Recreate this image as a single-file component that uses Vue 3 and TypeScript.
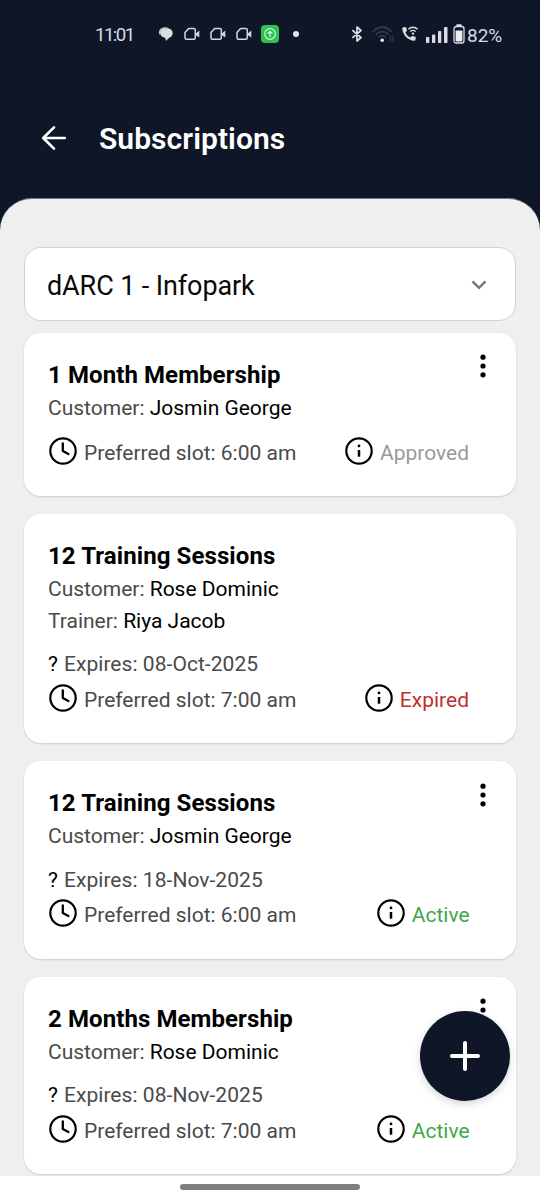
<script setup lang="ts">
interface Subscription {
  title: string
  customer: string
  trainer?: string
  expires?: string
  slot: string
  status: 'Approved' | 'Expired' | 'Active'
  menu: boolean
}

const subscriptions: Subscription[] = [
  { title: '1 Month Membership', customer: 'Josmin George', slot: '6:00 am', status: 'Approved', menu: true },
  { title: '12 Training Sessions', customer: 'Rose Dominic', trainer: 'Riya Jacob', expires: '08-Oct-2025', slot: '7:00 am', status: 'Expired', menu: false },
  { title: '12 Training Sessions', customer: 'Josmin George', expires: '18-Nov-2025', slot: '6:00 am', status: 'Active', menu: true },
  { title: '2 Months Membership', customer: 'Rose Dominic', expires: '08-Nov-2025', slot: '7:00 am', status: 'Active', menu: true },
]
</script>

<template>
  <div class="screen">
    <div class="statusbar">
      <span class="time">11:01</span>
      <div class="notices">
        <svg class="chat" width="16" height="16" viewBox="0 0 16 16">
          <path d="M1.2 8.500C-.2 4.200 3 1.200 7 1.200c1.500 0 3 .300 4 1-4-.4-8 1-8.300 6z" fill="#bfc1c7" />
          <path d="M8.500 2.300c3.600 0 6.200 2 6.200 4.800 0 2.500-1.700 4.300-3.800 4.900L8 15l-.7-3.100C4.500 11.400 2.400 9.700 2.400 7.300c0-2.900 2.800-5 6.100-5z" fill="#dcdde1" />
        </svg>
        <svg v-for="n in 3" :key="n" class="cam" width="16" height="14" viewBox="0 0 16 14">
          <path d="M4.600 1.500h5.200q1.500 0 1.500 1.500v7.800q0 1.500-1.500 1.500H2.500Q1 12.300 1 10.800V5.500z" fill="none" stroke="#d5d7dc" stroke-width="1.500" stroke-linejoin="round" />
          <path d="M12 6.300 15.300 3.600v7L12 8.300z" fill="#d5d7dc" />
        </svg>
        <svg class="green" width="18" height="18" viewBox="0 0 18 18">
          <rect width="18" height="18" rx="4" fill="#2fc052" />
          <circle cx="9" cy="9" r="5.300" fill="none" stroke="#c9f3d2" stroke-width="1.200" />
          <path d="M9 12V6.500M6.800 8.500 9 6.300l2.200 2.200" fill="none" stroke="#c9f3d2" stroke-width="1.300" />
        </svg>
        <span class="dot"></span>
      </div>
      <div class="system">
        <svg class="bt" width="12" height="18" viewBox="0 0 12 18">
          <path d="M1.300 5.200 10 12.500 6 16V2l4 3.500-8.700 7.300" fill="none" stroke="#dcdee2" stroke-width="1.700" stroke-linejoin="round" />
        </svg>
        <svg class="wifi" width="22" height="18" viewBox="0 0 22 18">
          <g fill="none" stroke="#2e3648" stroke-width="2" stroke-linecap="round">
            <path d="M1.500 6.200Q10 -2 19 6.200M4.300 9.300Q10.200 3.800 16 9.300M7 12Q10.200 9.300 13.300 12" />
            <path d="M18.500 11v5M21 11v5" stroke-width="1.400" />
          </g>
          <circle cx="10.200" cy="15.300" r="1.800" fill="#eceef0" />
        </svg>
        <svg class="call" width="18" height="18" viewBox="0 0 18 18">
          <path d="M1.300 3.500Q1 2.600 2 2.400L4.200 2q.8 0 1 .7l.7 2.500q.1.700-.4 1.100L4.300 7.500q1.600 3.500 5 5l1.400-1.300q.5-.4 1-.2l2.500.8q.7.300.6 1l-.4 2q-.2.900-1.100.9C7 15.500 1.700 10 1.300 3.500z" fill="#dcdee2" />
          <path d="M7.300 4.200q4.700-4 9.400 0M9.200 6.500q2.800-2.300 5.600 0" fill="none" stroke="#dcdee2" stroke-width="1.400" />
          <circle cx="12" cy="8.600" r="1.200" fill="#dcdee2" />
        </svg>
        <svg class="signal" width="22" height="16" viewBox="0 0 22 16">
          <g fill="#d9dbe0">
            <rect x="0" y="10" width="3.300" height="6" rx=".8" />
            <rect x="6" y="7.500" width="3.300" height="8.500" rx=".8" />
            <rect x="12" y="4" width="3.300" height="12" rx=".8" />
            <rect x="18" y="0" width="3.500" height="16" rx=".8" />
          </g>
        </svg>
        <svg class="battery" width="12" height="20" viewBox="0 0 12 20">
          <rect x="3.200" y=".3" width="5.600" height="2" rx="1" fill="#dcdee2" />
          <rect x="1" y="2.500" width="10" height="16.500" rx="2.200" fill="none" stroke="#dcdee2" stroke-width="1.300" />
          <rect x="2.600" y="6.500" width="6.800" height="10.900" rx=".8" fill="#eceef0" />
        </svg>
        <span class="pct">82%</span>
      </div>
    </div>

    <header class="header">
      <svg class="back" width="28" height="28" viewBox="0 0 28 28">
        <path d="M24.800 14H3.500M14 3.300 3.200 14 14 24.700" fill="none" stroke="#fff" stroke-width="2.600" stroke-linecap="round" stroke-linejoin="round" />
      </svg>
      <h1>Subscriptions</h1>
    </header>

    <main class="sheet">
      <div class="select">
        <span>dARC 1 - Infopark</span>
        <svg width="16" height="10" viewBox="0 0 16 10">
          <path d="M1.500 1.300 8 7.800l6.500-6.500" fill="none" stroke="#777" stroke-width="2.500" />
        </svg>
      </div>

      <article v-for="(item, i) in subscriptions" :key="i" class="card">
        <svg v-if="item.menu" class="menu" width="6" height="24" viewBox="0 0 6 24">
          <circle cx="3" cy="3.200" r="2.600" /><circle cx="3" cy="12" r="2.600" /><circle cx="3" cy="20.800" r="2.600" />
        </svg>
        <h2>{{ item.title }}</h2>
        <p class="line">Customer: <b>{{ item.customer }}</b></p>
        <p v-if="item.trainer" class="line">Trainer: <b>{{ item.trainer }}</b></p>
        <div class="details">
          <p v-if="item.expires" class="expires"><b>?</b> Expires: {{ item.expires }}</p>
          <div class="row">
            <svg class="icon" width="28" height="28" viewBox="0 0 28 28">
              <circle cx="14" cy="14" r="12.700" fill="none" stroke="#000" stroke-width="2.200" />
              <path d="M13.800 6.300V14l5.600 3" fill="none" stroke="#000" stroke-width="2.300" stroke-linecap="round" stroke-linejoin="round" />
            </svg>
            <span class="slot">Preferred slot: {{ item.slot }}</span>
            <svg class="icon info" width="28" height="28" viewBox="0 0 28 28">
              <circle cx="14" cy="14" r="12.700" fill="none" stroke="#000" stroke-width="2.200" />
              <circle cx="14" cy="8.900" r="1.400" />
              <path d="M14 13v6.700" stroke="#000" stroke-width="2.500" />
            </svg>
            <span class="status" :class="item.status.toLowerCase()">{{ item.status }}</span>
          </div>
        </div>
      </article>
    </main>

    <button class="fab" aria-label="Add subscription">
      <svg width="32" height="32" viewBox="0 0 32 32">
        <path d="M16 3v26M3 16h26" stroke="#fff" stroke-width="4" stroke-linecap="round" />
      </svg>
    </button>
    <div class="navbar"><span></span></div>
  </div>
</template>

<style>
body {
  margin: 0;
}
</style>

<style scoped>
.screen {
  position: relative;
  display: flex;
  flex-direction: column;
  width: 540px;
  height: 1200px;
  overflow: hidden;
  background: #0e1628;
  font-family: Roboto, "Liberation Sans", sans-serif;
}
.statusbar {
  display: flex;
  align-items: center;
  height: 68px;
  padding-left: 95px;
  color: #d9dbe0;
  font-size: 18.5px;
  flex: none;
}
.time {
  width: 63px;
  padding-top: 1px;
  letter-spacing: -1.6px;
  font-size: 18.7px;
}
.notices,
.system {
  display: flex;
  align-items: center;
}
.notices {
  width: 193px;
}
.cam {
  margin-left: 10px;
}
.green {
  margin-left: 9px;
}
.dot {
  width: 6px;
  height: 6px;
  margin-left: 14px;
  border-radius: 50%;
  background: #e4e5e8;
}
.wifi {
  margin-left: 9px;
}
.call {
  margin-left: 7px;
}
.signal {
  margin: 2px 0 0 7px;
}
.battery {
  margin-left: 5px;
}
.pct {
  margin: 2px 0 0 2px;
  font-size: 19px;
}
.header {
  display: flex;
  align-items: center;
  height: 130px;
  padding: 0 0 0 40px;
  box-sizing: border-box;
  flex: none;
}
.back {
  margin-top: 10px;
}
h1 {
  margin: 12px 0 0 31px;
  color: #fff;
  font-size: 30px;
  font-weight: 600;
  line-height: 40px;
  letter-spacing: 0.06px;
}
.sheet {
  flex: 1;
  min-height: 0;
  overflow: hidden;
  padding: 48px 24px 0;
  border-top: 1px solid #777985;
  border-radius: 32px 32px 0 0;
  background: #efefef;
}
.select {
  display: flex;
  align-items: center;
  justify-content: space-between;
  box-sizing: border-box;
  height: 74px;
  margin-bottom: 11.5px;
  padding: 3px 28px 0 22px;
  border: 1.500px solid #d3d3d3;
  border-radius: 17px;
  background: #fff;
  color: #0a0a0a;
  font-size: 27px;
  letter-spacing: -0.11px;
}
.select svg {
  margin-top: -2px;
}
.card {
  position: relative;
  margin-bottom: 18px;
  padding: 24px;
  border-radius: 17px;
  background: #fff;
  box-shadow: 0 1px 2px rgba(0, 0, 0, 0.15);
}
.menu {
  position: absolute;
  top: 21.5px;
  right: 30px;
}
h2 {
  margin: 0;
  color: #000;
  font-size: 24px;
  font-weight: 700;
  line-height: 36px;
  letter-spacing: 0.09px;
}
p {
  margin: 0;
}
.line,
.expires,
.row {
  color: #4a4a4a;
  font-size: 21px;
}
.line {
  line-height: 31.500px;
}
b {
  color: #000;
  font-weight: 400;
}
.details {
  padding-top: 12px;
}
.expires {
  height: 34px;
  line-height: 30px;
  letter-spacing: 0.05px;
}
.expires b {
  margin-right: 0.7px;
}
.row {
  display: flex;
  align-items: center;
  height: 36px;
  padding-right: 23px;
  line-height: 32px;
}
.icon {
  margin: -6.5px 7px 0 1px;
  flex: none;
}
.slot {
  margin-top: -2.5px;
}
.status {
  margin-top: -2.5px;
}
.info {
  margin-left: auto;
}
.approved {
  color: #999;
}
.expired {
  color: #c0302a;
}
.active {
  margin-right: -0.6px;
  color: #43a849;
}
.fab {
  position: absolute;
  right: 30px;
  bottom: 99px;
  display: grid;
  place-items: center;
  width: 90px;
  height: 90px;
  padding: 0;
  border: 0;
  border-radius: 50%;
  background: #0e1628;
  box-shadow: 0 3px 9px rgba(0, 0, 0, 0.16);
}
.navbar {
  display: flex;
  justify-content: center;
  height: 24px;
  background: #fff;
  flex: none;
}
.navbar span {
  width: 180px;
  height: 6px;
  margin-top: 7.5px;
  border-radius: 3px;
  background: #808080;
}
</style>
